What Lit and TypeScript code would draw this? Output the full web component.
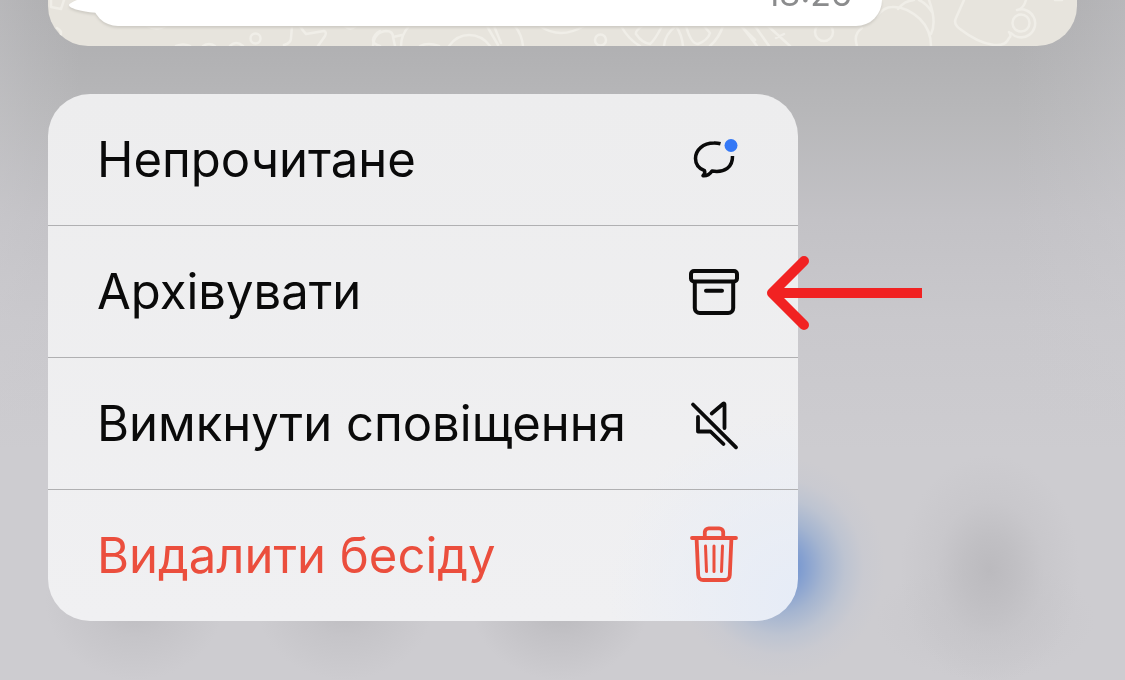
import { LitElement, html, svg, css } from "lit";
import { customElement } from "lit/decorators.js";

const unreadIcon = svg`
  <path d="M40.500 17.800A22 22 0 0 0 34 17C23 17 15.500 24 15.500 32.500C15.500 38.500 19 42.500 24.500 44.700C25.300 46.500 24.300 48.300 23 49.700C27 50 30 48 32 45C45 47 52.800 41 52.500 30" stroke-linecap="butt" />
  <circle cx="51" cy="19.500" r="6.500" fill="#3478f6" stroke="none" />`;

const archiveIcon = svg`
  <g stroke-width="4">
    <rect x="11" y="13" width="46" height="10.500" rx="3" />
    <path d="M14.800 24V50A5 5 0 0 0 19.800 55H48.200A5 5 0 0 0 53.200 50V24M26 32.700H42" />
  </g>`;

const muteIcon = svg`
  <path d="M13 14.500L56 57.300M31.700 23.500L43.200 13.700Q44.500 13 44.500 14.500V38M18 27V41.500H30.500L43.500 54" stroke-width="3.800" />`;

const trashIcon = svg`
  <path d="M12 16H56M24.800 15V10A4 4 0 0 1 28.800 6.300H39.200A4 4 0 0 1 43.200 10V15M16.600 17L18.200 53A5 5 0 0 0 23.200 58H44.800A5 5 0 0 0 49.800 53L51.400 17" stroke-width="3.800" />
  <path d="M25.500 24L26.500 49.500M34 24V49.500M42.500 24L41.500 49.500" stroke-width="3" />`;

const items = [
  { label: "Непрочитане", icon: unreadIcon },
  { label: "Архівувати", icon: archiveIcon, marked: true },
  { label: "Вимкнути сповіщення", icon: muteIcon },
  { label: "Видалити бесіду", icon: trashIcon, danger: true },
];

@customElement("chat-preview")
class ChatPreview extends LitElement {
  static styles = css`
    :host {
      display: grid;
      overflow: hidden;
      border-radius: 0 0 40px 40px;
      background: #e7e4dd;
    }
    .doodles {
      grid-area: 1 / 1;
      width: 100%;
      height: 46px;
      fill: none;
      stroke: #f0eee8;
      stroke-width: 2.5;
      stroke-linecap: round;
      stroke-linejoin: round;
    }
    .message {
      grid-area: 1 / 1;
      display: flex;
      align-items: flex-start;
      margin: 0 195px 20px 20px;
      filter: drop-shadow(0 2px 1px #cfccc5);
    }
    .tail {
      flex: none;
      width: 32px;
      height: 16px;
      margin-right: -8px;
      fill: #fff;
    }
    .bubble {
      flex: 1;
      display: flex;
      justify-content: flex-end;
      align-items: flex-end;
      height: 26px;
      box-sizing: border-box;
      padding: 0 30px 12px 0;
      border-radius: 0 0 32px 32px;
      background: #fff;
    }
    time {
      font: 34px/40px Inter, "Liberation Sans", sans-serif;
      color: #8b8c8d;
    }
  `;

  render() {
    return html`
      <svg class="doodles" viewBox="48 0 1029 46" preserveAspectRatio="xMinYMin slice" aria-hidden="true">
        <path d="M51 0V7L61 9L64 0M57 28Q63 31 60 36M147 26Q157 31 166 26M176 46Q183 43 190 46M203 46Q209 42 215 46M230 46Q236 40 243 46M284 45Q291 43 291 38L292 26M300 26Q303 31 306 34L324 31Q327 32 325 36L318 46M345 26Q350 31 356 26M380 46Q373 44 373 40Q374 34 380 31" />
        <circle cx="255.500" cy="38.500" r="5" />
        <path d="M373 46Q374 32 386 31Q393 31 393 37L395 46M393 37L402 35M401 46Q401 35 409 26M420 46Q428 42 439 46M449 46Q457 35 469 35Q482 35 490 46M487 26L498 45M494 26L501 43M515 26Q522 35 523 46M540 26Q560 40 584 26M621 26Q629 40 640 46M642 26Q635 31 636 34Q642 43 650 44Q655 40 662 26M676 26Q665 34 664 46M676 26Q682 35 683 46M686 26Q691 44 698 44Q708 40 710 33L704 26M723 26Q719 38 710 46M741 26L755 40M743 28L757 46M755 26L769 46M768 26L790 46M776 38L784 34" />
        <circle cx="600.500" cy="40" r="5.500" />
        <circle cx="824" cy="32" r="9" />
        <path d="M857 46Q853 34 862 28M877 16Q884 7 892 7Q906 6 920 19Q931 30 931 46M898 9Q904 1 914 0M919 0Q926 3 932 12M929 0Q937 22 931 34M964 0L956 18Q953 24 960 29Q978 43 994 45Q1006 46 1009 38Q1012 36 1009 32M1026 0Q1024 7 1020 9M1055 0L1062 0" />
        <circle cx="1021" cy="23" r="8.500" />
        <path d="M1017 10A14 14 0 1 1 1011 33" />
      </svg>
      <div class="message">
        <svg class="tail" viewBox="0 0 32 16" aria-hidden="true">
          <path d="M9 0C4 2 1 4 1 5C1 8 12 12 32 13V0Z" />
        </svg>
        <div class="bubble"><time>18:26</time></div>
      </div>
    `;
  }
}

@customElement("context-menu")
class ContextMenu extends LitElement {
  static styles = css`
    :host {
      display: block;
      width: min(750px, 100%);
      border-radius: 42px;
      background:
        radial-gradient(circle at 100% 96%, #e6ecf7 0, #e6ecf700 190px),
        linear-gradient(#ededee, #f0f0f2);
    }
    ul {
      list-style: none;
      margin: 0;
      padding: 0;
    }
    li {
      position: relative;
    }
    li + li {
      border-top: 1px solid #b0b0b2;
    }
    button {
      display: flex;
      align-items: center;
      justify-content: space-between;
      width: 100%;
      min-height: 131px;
      padding: 0 50px 0 49px;
      border: 0;
      background: none;
      color: #0a0a0a;
      font: 49px/64px Inter, "Liberation Sans", sans-serif;
      text-align: left;
      cursor: pointer;
    }
    .danger {
      color: #eb4e3d;
    }
    .icon {
      flex: none;
      width: 68px;
      height: 68px;
      fill: none;
      stroke: currentColor;
      stroke-width: 3.5;
      stroke-linecap: round;
      stroke-linejoin: round;
    }
    .arrow {
      position: absolute;
      top: 28px;
      right: -124px;
      width: 156px;
      height: 78px;
      fill: none;
      stroke: #f12222;
      stroke-width: 10;
      pointer-events: none;
    }
  `;

  render() {
    return html`
      <ul>
        ${items.map(
          (item) => html`
            <li>
              <button type="button" class=${item.danger ? "danger" : ""}>
                <span>${item.label}</span>
                <svg class="icon" viewBox="0 0 68 68" aria-hidden="true">${item.icon}</svg>
              </button>
              ${item.marked
                ? html`<svg class="arrow" viewBox="0 0 156 78" aria-hidden="true">
                    <path d="M38 7L6 39L38 71" stroke-linecap="round" stroke-linejoin="round" />
                    <path d="M7 39H156" />
                  </svg>`
                : null}
            </li>
          `,
        )}
      </ul>
    `;
  }
}

@customElement("app-root")
class AppRoot extends LitElement {
  static styles = css`
    :host {
      display: flex;
      flex-direction: column;
      gap: 48px;
      box-sizing: border-box;
      min-height: 100vh;
      padding: 0 48px 59px;
      background:
        radial-gradient(ellipse 105px 110px at 780px 567px, #6f93d2 0, #7d9bd0 18%, #a0b2d0e6 42%, #b4bfd2a0 62%, #c2c6d250 80%, #cdccd000 100%),
        radial-gradient(ellipse 90px 115px at 990px 570px, #bbbabe 0, #bebdc1d0 30%, #c4c3c780 60%, #cdccd000 100%),
        radial-gradient(ellipse 110px 60px at 985px 620px, #c4c3c790 0, #cdccd000 100%),
        radial-gradient(ellipse 90px 80px at 135px 600px, #bbbabe 0, #c1c0c4a0 45%, #cdccd000 100%),
        radial-gradient(ellipse 90px 80px at 345px 600px, #bbbabe 0, #c1c0c4a0 45%, #cdccd000 100%),
        radial-gradient(ellipse 90px 80px at 560px 600px, #b7b6ba 0, #bebdc1b0 45%, #cdccd000 100%),
        linear-gradient(90deg, #cdccd055 0, #cdccd030 30px, #cdccd000 80px calc(100% - 110px), #cdccd030 calc(100% - 40px), #cdccd055 100%),
        linear-gradient(#adadaf 0, #b1b1b3 50px, #b7b7b9 110px, #c3c2c6 220px, #c9c8cc 320px, #cdccd0 450px);
    }
  `;

  render() {
    return html`
      <chat-preview></chat-preview>
      <context-menu></context-menu>
    `;
  }
}
